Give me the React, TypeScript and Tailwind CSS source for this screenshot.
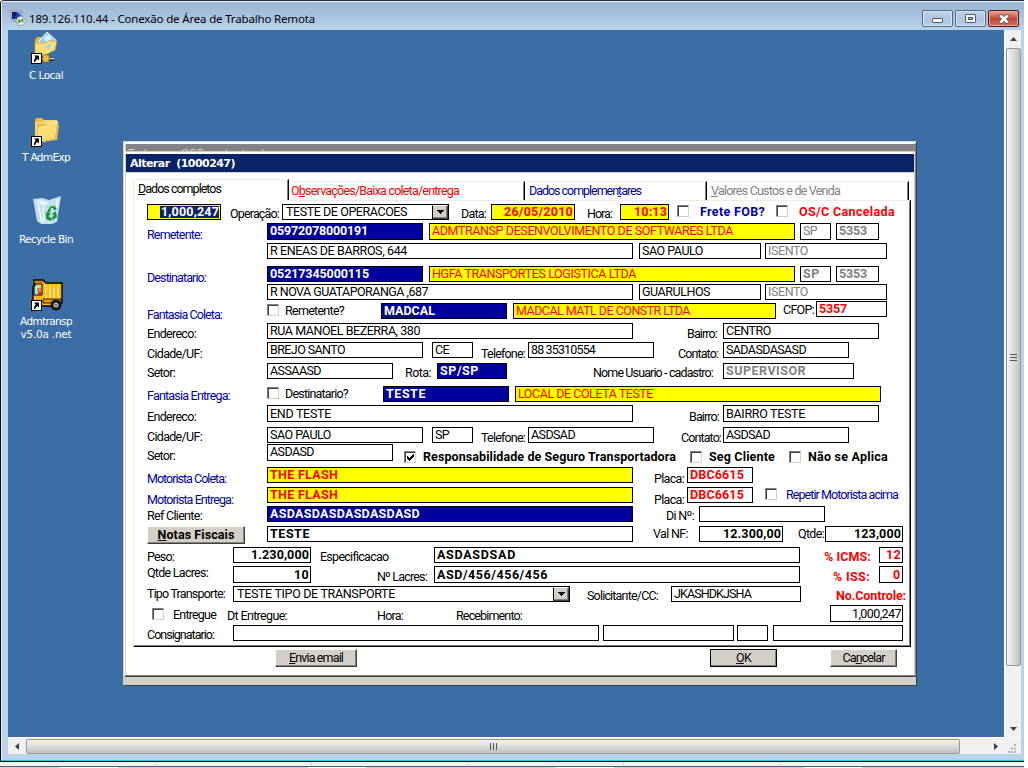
import { useLayoutEffect, useRef, type ReactNode } from "react";

/* Spreads a run of text over a given width (or over its parent's width). */
function Fit({ w, children, className = "" }: { w?: number; children: ReactNode; className?: string }) {
  const ref = useRef<HTMLSpanElement>(null);
  useLayoutEffect(() => {
    const el = ref.current;
    if (!el) return;
    el.style.letterSpacing = "0px";
    const natural = el.getBoundingClientRect().width;
    const count = (el.textContent || "").length;
    const goal = w ?? (el.parentElement ? el.parentElement.clientWidth : natural);
    el.style.letterSpacing = `${(goal - natural) / count}px`;
  }, [w, children]);
  return (
    <span ref={ref} className={`inline-block whitespace-pre ${className}`}>
      {children}
    </span>
  );
}

function Row({ h, children }: { h: string; children: ReactNode }) {
  return <div className={`flex shrink-0 items-start ${h}`}>{children}</div>;
}

function Label({ c, children }: { c: string; children: ReactNode }) {
  return (
    <div className={`shrink-0 h-[13px] leading-[11px] whitespace-nowrap ${c}`}>
      <Fit>{children}</Fit>
    </div>
  );
}

function Field({ c, t, v = "", right = false }: { c: string; t?: number; v?: string; right?: boolean }) {
  return (
    <div
      className={`shrink-0 flex overflow-hidden border border-black leading-[13px] ${
        right ? "justify-end pr-px" : "justify-start pl-[2px]"
      } ${c}`}
    >
      {v && <Fit w={t}>{v}</Fit>}
    </div>
  );
}

function Check({ c, on = false }: { c: string; on?: boolean }) {
  return (
    <div
      className={`shrink-0 h-[12px] w-[12px] border border-t-[#808080] border-l-[#808080] border-r-[#d4d0c8] border-b-[#d4d0c8] bg-white ${c}`}
    >
      <div className="h-full w-full border-t border-l border-[#404040]">
        {on && (
          <svg viewBox="0 0 9 9" className="h-[9px] w-[9px]" shapeRendering="crispEdges">
            <path d="M1 3v3h1v1h1v1h1v-1h1v-1h1v-1h1v-1h1v-3h-1v1h-1v1h-1v1h-1v1h-1v-1h-1v-1z" fill="#000" />
          </svg>
        )}
      </div>
    </div>
  );
}

function Combo({ c, t, v }: { c: string; t: number; v: string }) {
  return (
    <div className={`shrink-0 flex h-[16px] justify-between border border-black bg-white pl-[3px] leading-[14px] ${c}`}>
      <Fit w={t}>{v}</Fit>
      <div className="flex h-[14px] w-[16px] items-center justify-center border border-t-white border-l-black border-r-[#404040] border-b-[#404040] bg-[#d4d0c8] shadow-[inset_-1px_-1px_0_#808080]">
        <svg viewBox="0 0 7 4" className="h-[4px] w-[7px]" shapeRendering="crispEdges">
          <path d="M0 0h7v1h-1v1h-1v1h-1v1h-1v-1h-1v-1h-1v-1h-1z" />
        </svg>
      </div>
    </div>
  );
}

const BTN =
  "shrink-0 flex h-[18px] justify-center border border-t-white border-l-white border-r-[#404040] border-b-[#404040] bg-[#d4d0c8] shadow-[inset_-1px_-1px_0_#808080] leading-[16px]";
const BLUE = "bg-[#00009f] text-white font-bold";
const YEL = "bg-[#ffff00] text-[#ff0000]";
const NAVY = "text-[#00009f]";

function Shortcut() {
  return (
    <>
      <rect x="0.5" y="22.5" width="10" height="10" fill="#fff" stroke="#000" />
      <path d="M3 24.5h5v5l-1.6-1.6q-2 1-2.2 3.1h-1.4q-.1-3 1.9-4.8z" fill="#000" />
    </>
  );
}

function DeskLabel({ c, t, children }: { c: string; t: number; children: string }) {
  return (
    <div className={`flex justify-center font-['DejaVu_Sans',sans-serif] text-[10.5px] leading-[13px] text-white ${c}`}>
      <Fit w={t}>{children}</Fit>
    </div>
  );
}

function Desktop() {
  return (
    <div className="flex w-[76px] shrink-0 flex-col items-center">
      <svg className="ml-0 mt-[1px] h-[33px] w-[30px]" viewBox="0 0 30 33">
        <path d="M4 9l2-3h5l2 3v16H4z" fill="#e5b93c" />
        <path d="M8 10L16 1l9 8-7 11-9-2z" fill="#9dd0f3" stroke="#dff3ff" />
        <path d="M13 7l5-4 3 5-6 3z" fill="#daf1ff" />
        <path d="M4 23V12l10 0 4-2 8 0-2 9-10 5z" fill="#fbdd7c" stroke="#d5a52d" strokeWidth=".7" />
        <path d="M14 15l7-3-3 7z" fill="#9dd9ef" />
        <path d="M10 28h13" stroke="#303030" strokeWidth="4" />
        <path d="M11 27.5h12" stroke="#d9d9cf" strokeWidth="1.6" />
        <path d="M12 24h6v7h-6z" fill="#e8bf31" stroke="#765600" strokeWidth=".5" />
        <Shortcut />
      </svg>
      <DeskLabel c="mt-[5px] h-[48px]" t={34}>C Local</DeskLabel>

      <svg className="ml-0 -mt-[3px] h-[33px] w-[30px]" viewBox="0 0 30 33">
        <path d="M4 28V5l2-1h5l2 2h13v4l2 1-2 15-19 2z" fill="#e9bd49" />
        <path d="M5 27V9h21v-2H13" fill="none" stroke="#fff0a3" />
        <path d="M6 29l2-16 8-1 2-3 9-1-3 17z" fill="#fbdc75" stroke="#fff1ac" strokeWidth=".8" />
        <path d="M7 28l17-3 3-16" fill="none" stroke="#d49c22" strokeWidth=".8" />
        <Shortcut />
      </svg>
      <DeskLabel c="mt-[4px] h-[46px]" t={48}>T AdmExp</DeskLabel>

      <svg className="ml-[1px] -mt-[3px] h-[33px] w-[30px]" viewBox="0 0 30 33">
        <path d="M1 5l9-1 7 2 12-4-4 26-5 2H9l-4-3z" fill="#bddcef" />
        <path d="M3 7l7-1 7 3 10-5-3 22-6 3-9-1z" fill="#e7f6fd" />
        <path d="M3 7l9 5 12-6-2 22H9z" fill="#aed3e9" opacity=".7" />
        <path d="M6 10l4 18M11 13l1 15" stroke="#fff" strokeWidth="1.3" />
        <path d="M15 18l3-6h5l2 4h-3l-1-2h-2l-1 4zM24 17l1 6-4 3-1-2 2-3-2-1zM19 27l-5-2v-5l-1-1 4-1 2 3h-2v2l3 1z" fill="#1b9433" />
        <path d="M17 14l3-2h4" stroke="#7ada69" fill="none" />
      </svg>
      <DeskLabel c="mt-[6px] h-[45px]" t={54}>Recycle Bin</DeskLabel>

      <svg className="ml-[2px] mt-[1px] h-[33px] w-[32px]" viewBox="0 0 32 33">
        <path d="M3 1h9l3 3h16v20h-3v3H10v-3H2V8l2-3H3z" fill="#ffb51d" stroke="#000" strokeWidth="1.3" />
        <path d="M3 2h9l2 2h-9z" fill="#d97f00" />
        <path d="M3 15V8l2-3h6v11H3z" fill="#91f0ed" stroke="#000" />
        <path d="M6 9h4v4H6z" fill="#e9793d" />
        <path d="M6 6h4v3H6z" fill="#ffd230" />
        <path d="M7 13h3v3H7z" fill="#e02020" />
        <path d="M15 6v14M19 6v14M23 6v14M27 6v14" stroke="#ffe77a" strokeWidth="1.6" />
        <path d="M12 20h18v4H12z" fill="#ed9700" stroke="#000" strokeWidth=".8" />
        <circle cx="25" cy="26" r="5.5" fill="#161616" />
        <circle cx="25" cy="26" r="2.5" fill="#bbb" />
        <circle cx="25" cy="26" r="1" fill="#444" />
        <g transform="translate(0 -1)"><Shortcut /></g>
      </svg>
      <DeskLabel c="mt-[3px]" t={52}>Admtransp</DeskLabel>
      <DeskLabel c="" t={51}>v5.0a .net</DeskLabel>
    </div>
  );
}

function Tab({ c, children }: { c: string; children: ReactNode }) {
  return (
    <div
      className={`shrink-0 border-t border-t-[#ececea] border-r border-r-black shadow-[inset_-1px_0_0_#808080] leading-[13px] ${c}`}
    >
      {children}
    </div>
  );
}

function Form() {
  return (
    <div className="flex flex-col pl-[13px] pt-[3px]">
      <Row h="h-[19px]">
        <div className="flex h-[16px] w-[74px] shrink-0 justify-end border border-black bg-[#ffff00] p-[1px] font-bold text-white">
          <div className="h-[12px] bg-[#0a246a] pl-[1px] leading-[11px]">
            <Fit w={58}>1,000,247</Fit>
          </div>
        </div>
        <Label c="ml-[9px] mt-[4px] w-[49px]">Operação:</Label>
        <Combo c="ml-[3px] w-[167px]" t={121} v="TESTE DE OPERACOES" />
        <Label c="ml-[12px] mt-[4px] w-[25px]">Data:</Label>
        <Field c={`ml-[5px] h-[16px] w-[84px] font-bold ${YEL}`} t={69} v="26/05/2010" right />
        <Label c="ml-[12px] mt-[4px] w-[25px]">Hora:</Label>
        <Field c={`ml-[8px] h-[16px] w-[49px] font-bold ${YEL}`} t={33} v="10:13" right />
        <Check c="ml-[8px] mt-[1px]" />
        <Label c={`ml-[11px] mt-[2px] w-[65px] font-bold ${NAVY}`}>Frete FOB?</Label>
        <Check c="ml-[11px] mt-[1px]" />
        <Label c="ml-[11px] mt-[2px] w-[96px] font-bold text-[#ff0000]">OS/C Cancelada</Label>
      </Row>
      <Row h="h-[20px]">
        <Label c={`mt-[6px] w-[55px] ${NAVY}`}>Remetente:</Label>
        <Field c={`ml-[65px] h-[17px] w-[156px] ${BLUE}`} t={98} v="05972078000191" />
        <Field c={`ml-[6px] h-[17px] w-[366px] ${YEL}`} t={301} v="ADMTRANSP DESENVOLVIMENTO DE SOFTWARES LTDA" />
        <Field c="ml-[5px] h-[17px] w-[31px] text-[#808080]" t={14} v="SP" />
        <Field c="ml-[5px] h-[17px] w-[43px] font-bold text-[#808080]" t={28} v="5353" />
      </Row>
      <Row h="h-[23px]">
        <Field c="ml-[120px] h-[16px] w-[366px]" t={137} v="R ENEAS DE BARROS, 644" />
        <Field c="ml-[6px] h-[16px] w-[122px]" t={61} v="SAO PAULO" />
        <Field c="ml-[4px] h-[16px] w-[122px] text-[#808080]" t={40} v="ISENTO" />
      </Row>
      <Row h="h-[18px]">
        <Label c={`mt-[6px] w-[59px] ${NAVY}`}>Destinatario:</Label>
        <Field c={`ml-[61px] h-[16px] w-[156px] ${BLUE}`} t={99} v="05217345000115" />
        <Field c={`ml-[6px] h-[16px] w-[366px] ${YEL}`} t={204} v="HGFA TRANSPORTES LOGISTICA LTDA" />
        <Field c="ml-[5px] h-[16px] w-[31px] font-bold text-[#808080]" t={17} v="SP" />
        <Field c="ml-[5px] h-[16px] w-[43px] font-bold text-[#808080]" t={28} v="5353" />
      </Row>
      <Row h="h-[17px]">
        <Field c="ml-[120px] h-[16px] w-[366px]" t={158} v="R NOVA GUATAPORANGA ,687" />
        <Field c="ml-[6px] h-[16px] w-[122px]" t={68} v="GUARULHOS" />
        <Field c="ml-[4px] h-[16px] w-[122px] text-[#808080]" t={40} v="ISENTO" />
      </Row>
      <Row h="h-[22px]">
        <Label c={`mt-[8px] w-[75px] ${NAVY}`}>Fantasia Coleta:</Label>
        <Check c="ml-[45px] mt-[3px]" />
        <Label c="ml-[6px] mt-[4px] w-[59px]">Remetente?</Label>
        <Field c={`ml-[37px] mt-[2px] h-[16px] w-[126px] ${BLUE}`} t={51} v="MADCAL" />
        <Field c={`ml-[6px] mt-[2px] h-[16px] w-[263px] ${YEL}`} t={174} v="MADCAL MATL DE CONSTR LTDA" />
        <Label c="ml-[7px] mt-[3px] w-[31px]">CFOP:</Label>
        <Field c="ml-[2px] h-[16px] w-[71px] font-bold text-[#ff0000]" t={28} v="5357" />
      </Row>
      <Row h="h-[19px]">
        <Label c="mt-[5px] w-[49px]">Endereco:</Label>
        <Field c="ml-[71px] h-[16px] w-[366px]" t={150} v="RUA MANOEL BEZERRA, 380" />
        <Label c="ml-[54px] mt-[5px] w-[30px]">Bairro:</Label>
        <Field c="ml-[6px] h-[16px] w-[156px]" t={45} v="CENTRO" />
      </Row>
      <Row h="h-[21px]">
        <Label c="mt-[6px] w-[55px]">Cidade/UF:</Label>
        <Field c="ml-[65px] h-[16px] w-[156px]" t={75} v="BREJO SANTO" />
        <Field c="ml-[9px] h-[16px] w-[41px]" t={14} v="CE" />
        <Label c="ml-[8px] mt-[6px] w-[44px]">Telefone:</Label>
        <Field c="ml-[3px] h-[16px] w-[126px]" t={64} v="88 35310554" />
        <Label c="ml-[24px] mt-[6px] w-[40px]">Contato:</Label>
        <Field c="ml-[5px] h-[16px] w-[126px]" t={80} v="SADASDASASD" />
      </Row>
      <Row h="h-[23px]">
        <Label c="mt-[4px] w-[28px]">Setor:</Label>
        <Field c="ml-[92px] h-[16px] w-[126px]" t={51} v="ASSAASD" />
        <Label c="ml-[12px] mt-[4px] w-[26px]">Rota:</Label>
        <Field c={`ml-[6px] h-[16px] w-[70px] ${BLUE}`} t={39} v="SP/SP" />
        <Label c="ml-[86px] mt-[4px] w-[120px]">Nome Usuario - cadastro:</Label>
        <Field c="ml-[10px] h-[16px] w-[131px] font-bold text-[#808080]" t={80} v="SUPERVISOR" />
      </Row>
      <Row h="h-[19px]">
        <Label c={`mt-[4px] w-[83px] ${NAVY}`}>Fantasia Entrega:</Label>
        <Check c="ml-[37px] mt-[1px]" />
        <Label c="ml-[6px] mt-[2px] w-[63px]">Destinatario?</Label>
        <Field c={`ml-[35px] h-[16px] w-[126px] ${BLUE}`} t={40} v="TESTE" />
        <Field c={`ml-[6px] h-[16px] w-[366px] ${YEL}`} t={135} v="LOCAL DE COLETA TESTE" />
      </Row>
      <Row h="h-[22px]">
        <Label c="mt-[6px] w-[49px]">Endereco:</Label>
        <Field c="ml-[71px] h-[17px] w-[366px] pt-px" t={61} v="END TESTE" />
        <Label c="ml-[56px] mt-[6px] w-[30px]">Bairro:</Label>
        <Field c="ml-[4px] h-[17px] w-[156px] pt-px" t={79} v="BAIRRO TESTE" />
      </Row>
      <Row h="h-[17px]">
        <Label c="mt-[4px] w-[55px]">Cidade/UF:</Label>
        <Field c="ml-[65px] h-[16px] w-[156px]" t={61} v="SAO PAULO" />
        <Field c="ml-[9px] h-[16px] w-[41px]" t={14} v="SP" />
        <Label c="ml-[8px] mt-[5px] w-[44px]">Telefone:</Label>
        <Field c="ml-[3px] h-[16px] w-[126px]" t={44} v="ASDSAD" />
        <Label c="ml-[27px] mt-[5px] w-[40px]">Contato:</Label>
        <Field c="ml-[2px] h-[16px] w-[126px]" t={44} v="ASDSAD" />
      </Row>
      <Row h="h-[23px]">
        <Label c="mt-[6px] w-[28px]">Setor:</Label>
        <Field c="ml-[92px] h-[17px] w-[126px]" t={44} v="ASDASD" />
        <Check c="ml-[11px] mt-[7px]" on />
        <Label c="ml-[7px] mt-[7px] w-[253px] font-bold">Responsabilidade de Seguro Transportadora</Label>
        <Check c="ml-[14px] mt-[7px]" />
        <Label c="ml-[7px] mt-[7px] w-[66px] font-bold">Seg Cliente</Label>
        <Check c="ml-[14px] mt-[7px]" />
        <Label c="ml-[7px] mt-[7px] w-[80px] font-bold">Não se Aplica</Label>
      </Row>
      <Row h="h-[20px]">
        <Label c={`mt-[6px] w-[79px] ${NAVY}`}>Motorista Coleta:</Label>
        <Field c={`ml-[41px] h-[16px] w-[366px] font-bold ${YEL}`} t={68} v="THE FLASH" />
        <Label c="ml-[21px] mt-[6px] w-[30px]">Placa:</Label>
        <Field c="ml-[3px] h-[16px] w-[66px] font-bold text-[#ff0000]" t={54} v="DBC6615" />
      </Row>
      <Row h="h-[19px]">
        <Label c={`mt-[7px] w-[86px] ${NAVY}`}>Motorista Entrega:</Label>
        <Field c={`ml-[34px] h-[16px] w-[366px] font-bold ${YEL}`} t={68} v="THE FLASH" />
        <Label c="ml-[21px] mt-[7px] w-[30px]">Placa:</Label>
        <Field c="ml-[3px] h-[16px] w-[66px] font-bold text-[#ff0000]" t={54} v="DBC6615" />
        <Check c="ml-[12px] mt-[1px]" />
        <Label c={`ml-[9px] mt-[2px] w-[112px] ${NAVY}`}>Repetir Motorista acima</Label>
      </Row>
      <Row h="h-[20px]">
        <Label c="mt-[4px] w-[55px]">Ref Cliente:</Label>
        <Field c={`ml-[65px] h-[16px] w-[366px] ${BLUE}`} t={150} v="ASDASDASDASDASDASD" />
        <Label c="ml-[33px] mt-[4px] w-[28px]">Di Nº:</Label>
        <Field c="ml-[5px] h-[16px] w-[126px]" />
      </Row>
      <Row h="h-[21px]">
        <div className={`w-[98px] font-bold ${BTN}`}>
          <Fit w={77}><u>N</u>otas Fiscais</Fit>
        </div>
        <Field c="ml-[22px] h-[16px] w-[366px] font-bold" t={40} v="TESTE" />
        <Label c="ml-[20px] mt-[2px] w-[35px]">Val NF:</Label>
        <Field c="ml-[11px] h-[16px] w-[84px] font-bold" t={58} v="12.300,00" right />
        <Label c="ml-[15px] mt-[2px] w-[26px]">Qtde:</Label>
        <Field c="ml-[1px] h-[16px] w-[78px] font-bold" t={47} v="123,000" right />
      </Row>
      <Row h="h-[19px]">
        <Label c="mt-[4px] w-[27px]">Peso:</Label>
        <Field c="ml-[59px] h-[16px] w-[78px] font-bold" t={58} v="1.230,000" right />
        <Label c="ml-[9px] mt-[4px] w-[68px]">Especificacao</Label>
        <Field c="ml-[46px] h-[16px] w-[366px] font-bold" t={79} v="ASDASDSAD" />
        <Label c="ml-[24px] mt-[4px] w-[47px] font-bold text-[#ff0000]">% ICMS:</Label>
        <Field c="ml-[8px] h-[16px] w-[24px] pr-[3px] font-bold text-[#ff0000]" t={15} v="12" right />
      </Row>
      <Row h="h-[20px]">
        <Label c="mt-[1px] w-[61px]">Qtde Lacres:</Label>
        <Field c="ml-[25px] h-[17px] w-[78px] pt-px font-bold" t={15} v="10" right />
        <Label c="ml-[66px] mt-[5px] w-[50px]">Nº Lacres:</Label>
        <Field c="ml-[7px] h-[17px] w-[366px] pt-px font-bold" t={111} v="ASD/456/456/456" />
        <Label c="ml-[33px] mt-[5px] w-[37px] font-bold text-[#ff0000]">% ISS:</Label>
        <Field c="ml-[9px] h-[17px] w-[24px] pt-px pr-[3px] font-bold text-[#ff0000]" t={8} v="0" right />
      </Row>
      <Row h="h-[19px]">
        <Label c="mt-[2px] w-[78px]">Tipo Transporte:</Label>
        <Combo c="ml-[8px] w-[337px]" t={158} v="TESTE TIPO DE TRANSPORTE" />
        <Label c="ml-[17px] mt-[4px] w-[71px]">Solicitante/CC:</Label>
        <Field c="ml-[13px] h-[16px] w-[130px]" t={77} v="JKASHDKJSHA" />
        <Label c="ml-[35px] mt-[4px] w-[70px] font-bold text-[#ff0000]">No.Controle:</Label>
      </Row>
      <Row h="h-[20px]">
        <Check c="ml-[5px] mt-[3px]" />
        <Label c="ml-[9px] mt-[4px] w-[43px]">Entregue</Label>
        <Label c="ml-[11px] mt-[5px] w-[60px]">Dt Entregue:</Label>
        <Label c="ml-[90px] mt-[5px] w-[26px]">Hora:</Label>
        <Label c="ml-[53px] mt-[5px] w-[66px]">Recebimento:</Label>
        <Field c="ml-[308px] h-[17px] w-[73px] pt-px" t={49} v="1,000,247" right />
      </Row>
      <Row h="h-[17px]">
        <Label c="mt-[4px] w-[67px]">Consignatario:</Label>
        <Field c="ml-[19px] h-[16px] w-[366px]" />
        <Field c="ml-[4px] h-[16px] w-[131px]" />
        <Field c="ml-[3px] h-[16px] w-[31px]" />
        <Field c="ml-[5px] h-[16px] w-[130px]" />
      </Row>
    </div>
  );
}

function Dialog() {
  return (
    <div className="ml-[39px] mt-[111px] flex h-[545px] w-[794px] shrink-0 flex-col border border-t-[#d4d0c8] border-l-[#d4d0c8] border-r-[#404040] border-b-[#404040] bg-[#d4d0c8] font-[Roboto,'Liberation_Sans',sans-serif] text-[12.5px] text-black">
      <div className="flex h-[535px] shrink-0 flex-col border-t-2 border-l border-t-white border-l-white border-r border-r-[#808080] border-b border-b-[#404040]">
        <div className="ml-[1px] h-[7px] shrink-0 overflow-hidden bg-[#848284] pl-[2px] font-['DejaVu_Sans',sans-serif] text-[10.5px] leading-[19px] text-[#d4d0c8]">
          <Fit w={150}>Todas as OSE cadastradas</Fit>
        </div>
        <div className="h-px shrink-0 bg-[#d4d0c8]" />
        <div className="flex grow flex-col border border-t-white border-l-[#d4d0c8] border-r-[#d4d0c8] border-b-[#808080] bg-white pt-[1px]">
          <div className="h-[18px] shrink-0 bg-[#0a246a] pl-[4px] font-['DejaVu_Sans',sans-serif] text-[11px] font-bold leading-[19px] text-white">
            <Fit w={105}>Alterar  (1000247)</Fit>
          </div>
          <div className="h-px shrink-0 bg-[#d4d0c8]" />
          <div className="ml-[7px] mt-[6px] flex h-[468px] w-[778px] shrink-0 flex-col">
            <div className="flex h-[21px] shrink-0 items-end">
              <Tab c="h-[21px] w-[156px] border-l border-l-[#ececea] pl-[4px] pt-[2px]">
                <Fit w={83}><u>D</u>ados completos</Fit>
              </Tab>
              <Tab c="h-[19px] w-[236px] pl-[2px] pt-[2px] text-[#ff0000]">
                <Fit w={168}>O<u>b</u>servações/Baixa coleta/entrega</Fit>
              </Tab>
              <Tab c="h-[19px] w-[182px] pl-[4px] pt-[2px] text-[#00009f]">
                <Fit w={112}>Dados complemen<u>t</u>ares</Fit>
              </Tab>
              <Tab c="h-[19px] w-[202px] pl-[4px] pt-[2px] text-[#808080]">
                <Fit w={129}><u>V</u>alores Custos e de Venda</Fit>
              </Tab>
            </div>
            <div className="grow border-l border-l-[#ececea] border-r border-r-black border-b border-b-black shadow-[inset_-1px_-1px_0_#808080]">
              <div className="ml-[155px] h-px bg-[#ececea]" />
              <Form />
            </div>
          </div>
          <div className="flex pl-[149px] pt-[2px]">
            <div className={`w-[82px] ${BTN}`}><Fit w={54}><u>E</u>nvia email</Fit></div>
            <div className={`ml-[353px] w-[67px] outline outline-1 -outline-offset-1 outline-black ${BTN}`}><Fit w={15}><u>O</u>K</Fit></div>
            <div className={`ml-[53px] w-[67px] ${BTN}`}><Fit w={42}>Ca<u>n</u>celar</Fit></div>
          </div>
        </div>
      </div>
    </div>
  );
}

function CaptionButton({ c, children }: { c: string; children: ReactNode }) {
  return (
    <div className={`flex h-[17px] items-center justify-center rounded-[2px] border ${c}`}>
      {children}
    </div>
  );
}

export default function App() {
  return (
    <div className="h-[768px] w-[1028px] overflow-hidden bg-white">
      <div className="flex h-full w-[1024px] flex-col">
        <div className="flex h-[762px] shrink-0 flex-col overflow-hidden rounded-tl-[4px] border-t border-l border-b border-t-[#292833] border-l-black border-b-black bg-[#b9d1ea]">
          <div className="flex grow flex-col border-b border-l border-t border-b-[#20cfe4] border-l-[#eaf4fc] border-t-[#e8f1fa]">
            <div className="flex h-[28px] shrink-0 items-center bg-linear-to-b from-[#99b4d1] to-[#b9d1ea] pl-[8px]">
              <svg className="mt-[3px] h-[16px] w-[16px]" viewBox="0 0 16 16">
                <path d="M1 1h11v9H1z" fill="#e5e5e5" stroke="#8b8b8b" />
                <path d="M2 2h9v7H2z" fill="#173fae" />
                <path d="M2 2h5l-3 7H2z" fill="#0b1680" />
                <path d="M7 2h4v4z" fill="#6fa0e8" />
                <path d="M4 11h5v1H3z" fill="#999" />
                <circle cx="10.7" cy="11" r="4.5" fill="#f2f6ef" stroke="#7b8c73" strokeWidth=".7" />
                <path d="M7.8 9.5l2.2 1.7-2.2 1.8M13.5 8.7l-2.2 1.8 2.2 1.8" fill="none" stroke="#25922e" strokeWidth="1.3" />
              </svg>
              <div className="ml-[3px] mt-[5px] grow font-['Noto_Sans','Open_Sans',sans-serif] text-[11.5px] leading-[16px] text-black">
                <Fit w={286}>189.126.110.44 - Conexão de Área de Trabalho Remota</Fit>
              </div>
              <div className="mt-[5px] flex gap-[2px] pr-[5px]">
                <CaptionButton c="w-[31px] border-[#536a87] bg-linear-to-b from-[#c1d5ea] via-[#abc4df] to-[#b8cfe8] shadow-[inset_0_0_0_1px_#d7e5f3]">
                  <div className="mt-[3px] h-[5px] w-[11px] rounded-[1px] border border-[#555a66] bg-white" />
                </CaptionButton>
                <CaptionButton c="w-[31px] border-[#536a87] bg-linear-to-b from-[#c1d5ea] via-[#abc4df] to-[#b8cfe8] shadow-[inset_0_0_0_1px_#d7e5f3]">
                  <div className="flex h-[9px] w-[11px] items-center justify-center rounded-[1px] border border-[#555a66] bg-white">
                    <div className="h-[3px] w-[5px] border border-[#555a66] bg-[#9bb8dc]" />
                  </div>
                </CaptionButton>
                <CaptionButton c="w-[31px] border-[#541522] bg-linear-to-b from-[#e9a797] via-[#c3442f] to-[#d4735d] shadow-[inset_0_0_0_1px_#e3a79b]">
                  <svg className="h-[10px] w-[12px]" viewBox="0 0 12 10">
                    <path d="M1 .7h3l2 2 2-2h3v1.6L8.5 5 11 7.7v1.6H8l-2-2-2 2H1V7.7L3.5 5 1 2.3z" fill="#fff" stroke="#4d4d60" strokeWidth=".9" />
                  </svg>
                </CaptionButton>
              </div>
            </div>
            <div className="ml-[6px] mr-[3px] flex h-[707px] shrink-0">
              <div className="flex w-[996px] shrink-0 items-start bg-[#3a6ea5]">
                <Desktop />
                <Dialog />
              </div>
              <div className="flex w-[17px] shrink-0 flex-col items-center border-l border-l-white bg-[#f0f0f0]">
                <div className="flex h-[18px] shrink-0 items-center">
                  <svg className="h-[4px] w-[7px]" viewBox="0 0 7 4"><path d="M0 4L3.5 0 7 4z" fill="#404040" /></svg>
                </div>
                <div className="flex h-[618px] w-[15px] shrink-0 flex-col items-center justify-center gap-[2px] rounded-[2px] border border-[#979797] bg-linear-to-r from-[#f3f3f3] via-[#dcdcdc] to-[#bfc0c2]">
                  <div className="h-px w-[7px] bg-[#555]" />
                  <div className="h-px w-[7px] bg-[#555]" />
                  <div className="h-px w-[7px] bg-[#555]" />
                </div>
                <div className="grow" />
                <div className="flex h-[17px] shrink-0 items-center">
                  <svg className="h-[4px] w-[7px]" viewBox="0 0 7 4"><path d="M0 0h7L3.5 4z" fill="#404040" /></svg>
                </div>
              </div>
            </div>
            <div className="ml-[6px] mr-[3px] flex h-[17px] shrink-0 items-center border-t border-t-white bg-[#f0f0f0]">
              <div className="flex w-[18px] shrink-0 justify-center">
                <svg className="h-[7px] w-[4px]" viewBox="0 0 4 7"><path d="M4 0v7L0 3.5z" fill="#404040" /></svg>
              </div>
              <div className="flex h-[15px] w-[934px] shrink-0 items-center justify-center gap-[2px] rounded-[2px] border border-[#979797] bg-linear-to-b from-[#f3f3f3] via-[#dcdcdc] to-[#bfc0c2]">
                <div className="h-[7px] w-px bg-[#555]" />
                <div className="h-[7px] w-px bg-[#555]" />
                <div className="h-[7px] w-px bg-[#555]" />
              </div>
              <div className="ml-[34px] w-[10px]">
                <svg className="h-[7px] w-[4px]" viewBox="0 0 4 7"><path d="M0 0v7l4-3.5z" fill="#404040" /></svg>
              </div>
              <svg className="ml-[3px] mt-[4px] h-[9px] w-[9px]" viewBox="0 0 9 9" fill="#b4b4b4">
                <path d="M7 0h2v2H7zM4 3.5h2v2H4zM7 3.5h2v2H7zM1 7h2v2H1zM4 7h2v2H4zM7 7h2v2H7z" />
              </svg>
            </div>
          </div>
        </div>
        <div className="flex h-[4px] shrink-0 gap-[155px] bg-[#f3f4f0] pl-[155px]">
          <div className="w-px bg-[#d0d4d8]" />
          <div className="w-px bg-[#d0d4d8]" />
          <div className="w-px bg-[#d0d4d8]" />
          <div className="w-px bg-[#d0d4d8]" />
          <div className="w-px bg-[#d0d4d8]" />
        </div>
        <div className="h-px shrink-0 bg-[#52606a]" />
        <div className="flex h-px shrink-0 bg-[#c3d5dc]">
          <div className="ml-[60px] w-[58px] bg-white" />
          <div className="ml-[190px] w-[58px] bg-white" />
          <div className="ml-[190px] w-[58px] bg-white" />
          <div className="ml-[190px] w-[58px] bg-white" />
        </div>
      </div>
    </div>
  );
}
